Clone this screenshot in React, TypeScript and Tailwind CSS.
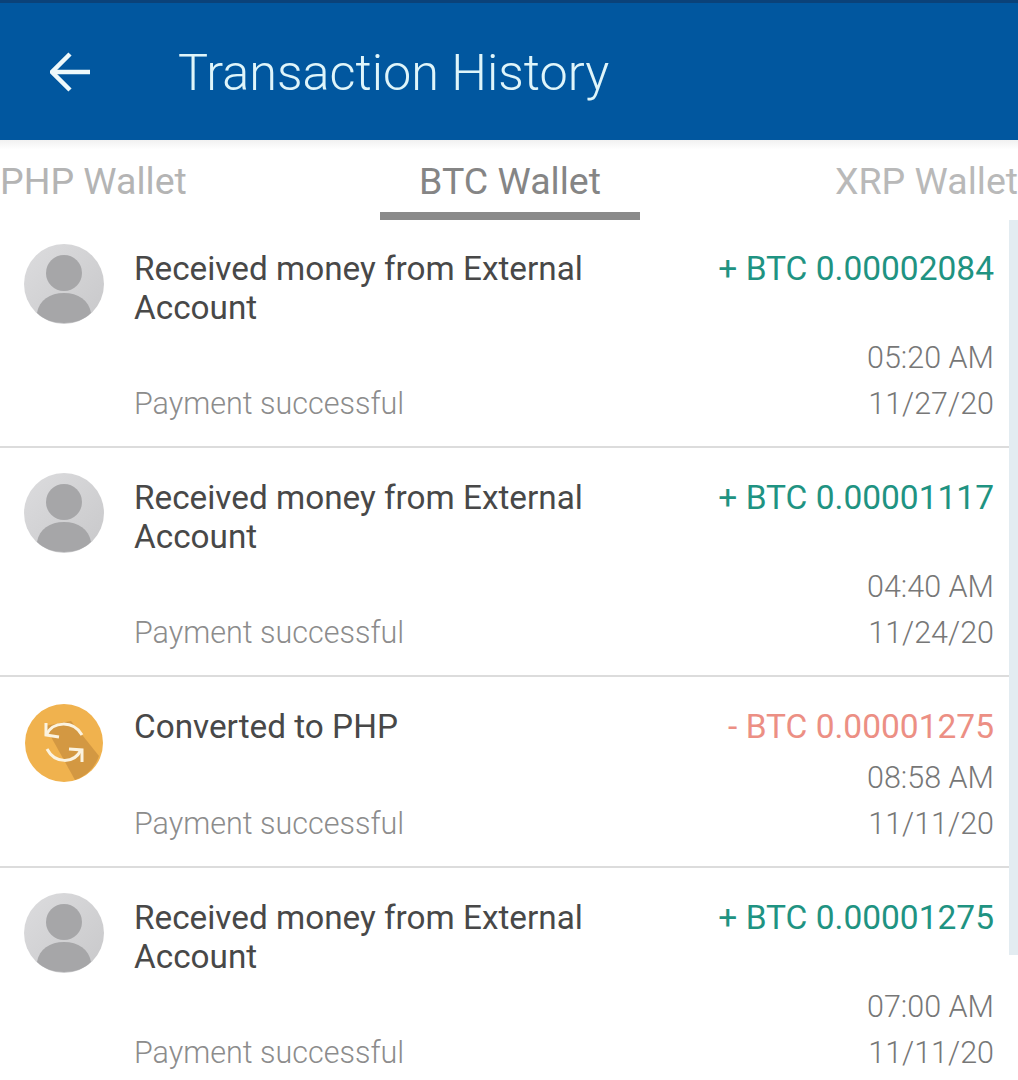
const FONT = "font-['Roboto',sans-serif]";

type Tx = {
  title: string;
  amount: string;
  time: string;
  date: string;
  kind: 'in' | 'convert';
};

const transactions: Tx[] = [
  { title: 'Received money from External Account', amount: '+ BTC 0.00002084', time: '05:20 AM', date: '11/27/20', kind: 'in' },
  { title: 'Received money from External Account', amount: '+ BTC 0.00001117', time: '04:40 AM', date: '11/24/20', kind: 'in' },
  { title: 'Converted to PHP', amount: '- BTC 0.00001275', time: '08:58 AM', date: '11/11/20', kind: 'convert' },
  { title: 'Received money from External Account', amount: '+ BTC 0.00001275', time: '07:00 AM', date: '11/11/20', kind: 'in' },
];

function PersonAvatar() {
  return (
    <svg viewBox="0 0 80 80" className="h-20 w-20 shrink-0">
      <defs>
        <linearGradient id="avatarBg" x1="0" y1="0" x2="1" y2="1">
          <stop offset="0" stopColor="#dcdcde" />
          <stop offset="1" stopColor="#c8c8ca" />
        </linearGradient>
      </defs>
      <circle cx="40" cy="40" r="40" fill="url(#avatarBg)" />
      <circle cx="40" cy="29" r="18" fill="#a6a6a8" />
      <path d="M13 69 C15 56 26 49 40 49 C54 49 65 56 67 69 C60 76 50 79 40 79 C30 79 20 76 13 69 Z" fill="#a6a6a8" />
    </svg>
  );
}

function ConvertAvatar() {
  return (
    <svg viewBox="0 0 78 78" className="h-[78px] w-[78px] shrink-0">
      <circle cx="39" cy="39" r="39" fill="#f0b24e" />
      <path d="M20 22 L46 17 L74 52 A39 39 0 0 1 50 76 Z" fill="#c98f3f" opacity="0.75" />
      <g fill="none" stroke="#fbf3e0" strokeWidth="3">
        <path d="M21 31 C28 17 48 16 57 31" />
        <path d="M56 46 C49 60 30 60 22 45" />
        <path d="M21 19 L21 31 L34 33" />
        <path d="M57 58 L57 46 L44 45" />
      </g>
    </svg>
  );
}

function Row({ tx, index }: { tx: Tx; index: number }) {
  const isIn = tx.kind === 'in';
  return (
    <div className={`flex gap-[30px] border-b-2 border-[#dcdcdc] pb-[19px] pl-6 pr-6 ${index === 0 ? 'pt-[29px]' : 'pt-[30px]'}`}>
      {isIn ? (
        <div className="-mt-[5px]">
          <PersonAvatar />
        </div>
      ) : (
        <div className="-mt-[3px] ml-px mr-px">
          <ConvertAvatar />
        </div>
      )}
      <div className="min-w-0 flex-1">
        <div className="flex justify-between">
          <div className="w-[480px] text-[33.3px] leading-[39px] text-[#484848]">{tx.title}</div>
          <div className={`whitespace-nowrap text-[33.5px] leading-[39px] ${isIn ? 'text-[#1f9382]' : 'text-[#ec8f84]'}`}>
            {tx.amount}
          </div>
        </div>
        <div className={`flex items-end justify-between ${isIn ? 'mt-2' : 'mt-[9px]'}`}>
          <div className="text-[30.5px] font-light leading-[46px] text-[#8c8c8c]">Payment successful</div>
          <div className="text-right text-[30.5px] font-light leading-[46px] text-[#777777]">
            <div>{tx.time}</div>
            <div>{tx.date}</div>
          </div>
        </div>
      </div>
    </div>
  );
}

export default function App() {
  return (
    <div className={`${FONT} relative h-[1080px] w-[1018px] overflow-hidden bg-white`}>
      <header className="flex h-[140px] items-center border-t-[3px] border-[#0b4279] bg-[#01579f]">
        <svg viewBox="0 0 40 40" className="ml-[50px] h-10 w-10" fill="none" stroke="#eef9fb" strokeWidth="4.5">
          <path d="M40 20 H3" />
          <path d="M20 2 L2 20 L20 38" />
        </svg>
        <h1 className="ml-[88px] pt-[3px] text-[50.4px] font-light leading-none text-[#dff5fa]">Transaction History</h1>
      </header>
      <nav className="grid h-[80px] grid-cols-[187px_1fr_185px] bg-gradient-to-b from-[#f1f1f1] to-white to-[12%] text-[37.5px]">
        <button className="whitespace-nowrap pt-[3px] text-left text-[#b4b4b4]">PHP Wallet</button>
        <button className="h-full w-[260px] justify-self-center border-b-[8px] border-[#8a8a8a] pt-[11px] text-[#858585]">BTC Wallet</button>
        <button className="whitespace-nowrap pt-[3px] pl-[2px] text-left text-[#b9b9b9]">XRP Wallet</button>
      </nav>
      <div>
        {transactions.map((tx, i) => (
          <Row key={i} tx={tx} index={i} />
        ))}
      </div>
      <div className="absolute right-0 top-[220px] h-[735px] w-[9px] bg-[#e3ecf1]" />
    </div>
  );
}
